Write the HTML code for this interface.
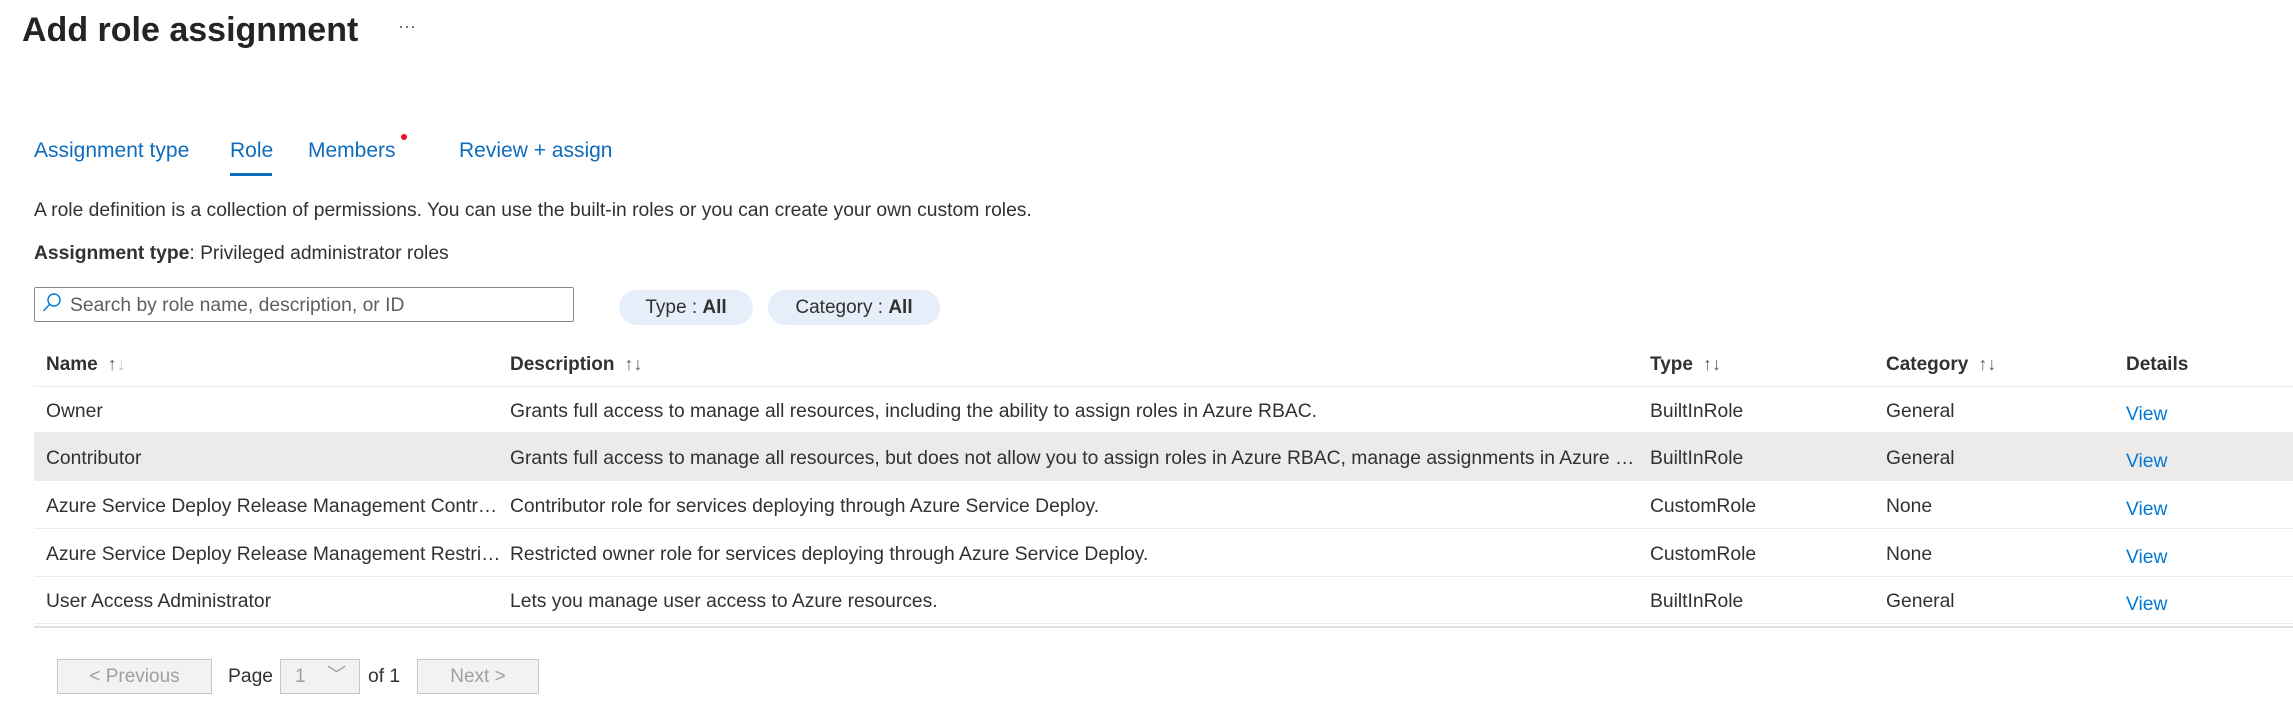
<!DOCTYPE html>
<html><head><meta charset="utf-8"><style>
*{margin:0;padding:0;box-sizing:border-box}
body{width:2293px;height:706px;background:#fff;font-family:"Liberation Sans",sans-serif;color:#323130;position:relative;overflow:hidden}
.a{position:absolute;white-space:nowrap}
.tab{font-size:21px;color:#0f6cbd;top:139px}
.t{font-size:19.3px}
.row{position:absolute;left:34px;right:0;height:48px;border-bottom:1px solid #edebe9}
.cell{position:absolute;top:50%;transform:translateY(-50%);font-size:19.3px;white-space:nowrap;margin-top:2px}
.view{color:#0078d4;margin-top:5px}
.hd{font-weight:bold;font-size:19px}
.arr{color:#605e5c;font-weight:normal;margin-left:10px;font-size:18px}
.pill{position:absolute;top:290px;height:35px;background:#e5eef9;border-radius:18px;font-size:19px;line-height:36px;text-align:center}
.btn{position:absolute;top:659px;height:35px;border:1px solid #c8c6c4;background:#f3f2f1;color:#a19f9d;font-size:19px;line-height:34px;text-align:center}
</style></head><body>
<div class="a" style="left:22px;top:11px;font-size:34px;font-weight:bold;color:#242424">Add role assignment</div>
<div class="a" style="left:398px;top:16px;font-size:18px;color:#605e5c">···</div>

<div class="a tab" style="left:34px">Assignment type</div>
<div class="a tab" style="left:230px">Role</div>
<div class="a" style="left:230px;top:173px;width:42px;height:3px;background:#0f6cbd"></div>
<div class="a tab" style="left:308px">Members</div>
<div class="a" style="left:401px;top:134px;width:6px;height:6px;border-radius:50%;background:#e81123"></div>
<div class="a tab" style="left:459px">Review + assign</div>

<div class="a t" style="left:34px;top:200px">A role definition is a collection of permissions. You can use the built-in roles or you can create your own custom roles.</div>
<div class="a t" style="left:34px;top:243px"><b>Assignment type</b>: Privileged administrator roles</div>

<div class="a" style="left:34px;top:287px;width:540px;height:35px;border:1px solid #8a8886;border-radius:2px"></div>
<svg class="a" style="left:42px;top:292px" width="20" height="22" viewBox="0 0 20 22"><circle cx="12" cy="8" r="6" fill="none" stroke="#0078d4" stroke-width="1.4"/><line x1="7.5" y1="12.5" x2="1.5" y2="19" stroke="#0078d4" stroke-width="1.4"/></svg>
<div class="a t" style="left:70px;top:295px;color:#605e5c">Search by role name, description, or ID</div>

<div class="pill" style="left:619px;width:134px">Type : <b>All</b></div>
<div class="pill" style="left:768px;width:172px">Category : <b>All</b></div>

<div class="row" style="top:339px;height:48px">
<div class="cell hd" style="left:12px">Name<span class="arr">↑<span style="color:#c8c6c4">↓</span></span></div>
<div class="cell hd" style="left:476px">Description<span class="arr">↑↓</span></div>
<div class="cell hd" style="left:1616px">Type<span class="arr">↑↓</span></div>
<div class="cell hd" style="left:1852px">Category<span class="arr">↑↓</span></div>
<div class="cell hd" style="left:2092px">Details</div>
</div>
<div class="row" style="top:387px;height:46px">
<div class="cell" style="left:12px">Owner</div>
<div class="cell" style="left:476px">Grants full access to manage all resources, including the ability to assign roles in Azure RBAC.</div>
<div class="cell" style="left:1616px">BuiltInRole</div><div class="cell" style="left:1852px">General</div><div class="cell view" style="left:2092px">View</div>
</div>
<div class="row" style="top:433px;background:#edebe9">
<div class="cell" style="left:12px">Contributor</div>
<div class="cell" style="left:476px;width:1128px;overflow:hidden;text-overflow:ellipsis">Grants full access to manage all resources, but does not allow you to assign roles in Azure RBAC, manage assignments in Azure Blueprints, or share image galleries.</div>
<div class="cell" style="left:1616px">BuiltInRole</div><div class="cell" style="left:1852px">General</div><div class="cell view" style="left:2092px">View</div>
</div>
<div class="row" style="top:481px">
<div class="cell" style="left:12px;width:452px;overflow:hidden;text-overflow:ellipsis">Azure Service Deploy Release Management Contributor</div>
<div class="cell" style="left:476px">Contributor role for services deploying through Azure Service Deploy.</div>
<div class="cell" style="left:1616px">CustomRole</div><div class="cell" style="left:1852px">None</div><div class="cell view" style="left:2092px">View</div>
</div>
<div class="row" style="top:529px">
<div class="cell" style="left:12px;width:464px;overflow:hidden;text-overflow:ellipsis">Azure Service Deploy Release Management Restricted Owner</div>
<div class="cell" style="left:476px">Restricted owner role for services deploying through Azure Service Deploy.</div>
<div class="cell" style="left:1616px">CustomRole</div><div class="cell" style="left:1852px">None</div><div class="cell view" style="left:2092px">View</div>
</div>
<div class="row" style="top:577px;height:47px">
<div class="cell" style="left:12px">User Access Administrator</div>
<div class="cell" style="left:476px">Lets you manage user access to Azure resources.</div>
<div class="cell" style="left:1616px">BuiltInRole</div><div class="cell" style="left:1852px">General</div><div class="cell view" style="left:2092px">View</div>
</div>
<div class="a" style="left:34px;right:0;top:626px;height:2px;background:#e1dfdd"></div>

<div class="btn" style="left:57px;width:155px">&lt; Previous</div>
<div class="a t" style="left:228px;top:666px">Page</div>
<div class="btn" style="left:280px;width:80px;background:#f3f2f1;text-align:left;padding-left:14px">1<span style="position:absolute;left:46px;top:-1px;color:#a19f9d">﹀</span></div>
<div class="a t" style="left:368px;top:666px">of 1</div>
<div class="btn" style="left:417px;width:122px">Next &gt;</div>
</body></html>
